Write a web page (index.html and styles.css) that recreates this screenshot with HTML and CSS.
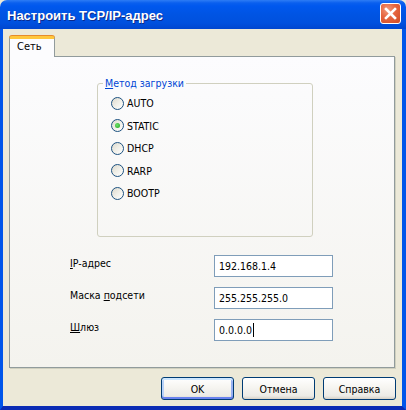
FILE: index.html
```html
<!DOCTYPE html>
<html lang="ru">
<head>
<meta charset="utf-8">
<title>Настроить TCP/IP-адрес</title>
<link rel="stylesheet" href="styles.css">
</head>
<body>
<div class="window">
  <div class="titlebar">
    <span class="title">Настроить TCP/IP-адрес</span>
    <span class="close">
      <svg width="13" height="13" viewBox="0 0 13 13"><path d="M2 2 L11 11 M11 2 L2 11" stroke="#fff" stroke-width="2.6" stroke-linecap="square"/></svg>
    </span>
  </div>
  <div class="frame">
    <div class="tabs"><span class="tab">Сеть</span></div>
    <div class="panel">
      <fieldset class="group">
        <legend><u>М</u>етод загрузки</legend>
        <div class="radios">
          <div class="radio-row"><span class="radio"></span>AUTO</div>
          <div class="radio-row"><span class="radio checked"></span>STATIC</div>
          <div class="radio-row"><span class="radio"></span>DHCP</div>
          <div class="radio-row"><span class="radio"></span>RARP</div>
          <div class="radio-row"><span class="radio"></span>BOOTP</div>
        </div>
      </fieldset>
      <div class="fields">
        <span class="label"><u>I</u>P-адрес</span>
        <span class="input">192.168.1.4</span>
        <span class="label">Маска <u>п</u>одсети</span>
        <span class="input">255.255.255.0</span>
        <span class="label"><u>Ш</u>люз</span>
        <span class="input">0.0.0.0<span class="caret"></span></span>
      </div>
    </div>
    <div class="buttons">
      <span class="btn default">OK</span>
      <span class="btn">Отмена</span>
      <span class="btn">Справка</span>
    </div>
  </div>
</div>
</body>
</html>
```
FILE: styles.css
```css
html, body { margin: 0; padding: 0; }
body {
  width: 406px;
  height: 410px;
  overflow: hidden;
  background: #ece9d8;
  font-family: "DejaVu Sans Condensed", "DejaVu Sans", sans-serif;
  font-size: 10.5px;
  color: #000;
}
.window {
  width: 406px;
  height: 410px;
  display: flex;
  flex-direction: column;
}
.titlebar {
  height: 29px;
  flex: none;
  display: flex;
  align-items: center;
  justify-content: space-between;
  padding: 0 5px 0 7px;
  box-sizing: border-box;
  background: linear-gradient(#2d7cf5 0, #0a5fee 3px, #0058ee 6px, #0054e3 50%, #0050de 80%, #0046cf 100%);
  border-radius: 7px 7px 0 0;
}
.title {
  color: #fff;
  font-family: "Liberation Sans", sans-serif;
  font-weight: bold;
  font-size: 13px;
  text-shadow: 1px 1px 0 #0c2a8c;
  padding-top: 1px;
}
.close {
  width: 21px;
  height: 21px;
  box-sizing: border-box;
  border: 1px solid #fff;
  border-radius: 3px;
  background: radial-gradient(circle at 35% 30%, #f19a7e 0, #e5643e 45%, #cf4a24 100%);
  display: flex;
  align-items: center;
  justify-content: center;
  margin-top: -2px;
}
.frame {
  flex: 1;
  display: flex;
  flex-direction: column;
  border-left: 3px solid #0055ea;
  border-right: 4px solid #0055ea;
  border-bottom: 4px solid #0a2bb4;
  padding: 7px 3px 0 6px;
}
.tabs {
  height: 20px;
  display: flex;
  position: relative;
  z-index: 1;
}
.tab {
  width: 46px;
  height: 21px;
  box-sizing: border-box;
  border: 1px solid #919b9c;
  border-top: 3px solid #ffc73c;
  border-bottom: none;
  border-radius: 3px 3px 0 0;
  box-shadow: 0 -1px 0 #e68b2c;
  background: #fcfcfe;
  padding: 1px 0 0 7px;
  font-size: 11px;
}
.panel {
  width: 386px;
  height: 312px;
  box-sizing: border-box;
  border: 1px solid #919b9c;
  box-shadow: 1px 1px 0 #d0d0bf;
  background: linear-gradient(#fcfcfe, #f4f3ee);
  margin-right: 4px;
}
.group {
  margin: 20px 0 0 87px;
  width: 216px;
  box-sizing: border-box;
  border: 1px solid #d0d0bf;
  border-radius: 3px;
  padding: 0;
  min-width: 0;
}
.group legend {
  color: #0046d5;
  padding: 0 2px;
  margin-left: 5px;
  line-height: 13px;
}
.radios {
  padding: 2px 0 31px 13px;
}
.radio-row {
  height: 22.5px;
  display: flex;
  align-items: center;
}
.radio {
  width: 13px;
  height: 13px;
  box-sizing: border-box;
  border: 1px solid #1c5180;
  border-radius: 50%;
  background: linear-gradient(135deg, #dcd9cd 0, #f0efe8 50%, #ffffff 100%);
  margin-right: 3px;
  display: flex;
  align-items: center;
  justify-content: center;
}
.radio.checked::after {
  content: "";
  width: 5px;
  height: 5px;
  border-radius: 50%;
  background: radial-gradient(circle at 40% 40%, #6ee36a 0, #21a121 100%);
}
.fields {
  display: grid;
  grid-template-columns: 144px 119px;
  grid-auto-rows: 22px;
  row-gap: 10px;
  margin: 18px 0 0 60px;
}
.label {
  padding-top: 2px;
  line-height: 13px;
}
.input {
  box-sizing: border-box;
  border: 1px solid #7f9db9;
  background: #fff;
  padding: 0 0 0 4px;
  line-height: 20px;
  display: flex;
  align-items: center;
}
.caret {
  width: 1px;
  height: 14px;
  background: #000;
  margin-left: 1px;
}
.buttons {
  display: flex;
  justify-content: flex-end;
  gap: 8px;
  margin-top: 9px;
  padding-right: 3px;
}
.btn {
  width: 73px;
  height: 23px;
  box-sizing: border-box;
  border: 1px solid #003c74;
  border-radius: 3px;
  background: linear-gradient(#ffffff 0, #f7f6f2 40%, #ecebe6 85%, #d6d0c5 100%);
  display: flex;
  align-items: center;
  justify-content: center;
}
.btn.default {
  box-shadow: inset 0 2px 0 #cee7ff, inset 0 -2px 0 #6982ee, inset 2px 0 0 #b8d2f8, inset -2px 0 0 #98b2f2;
}
```
